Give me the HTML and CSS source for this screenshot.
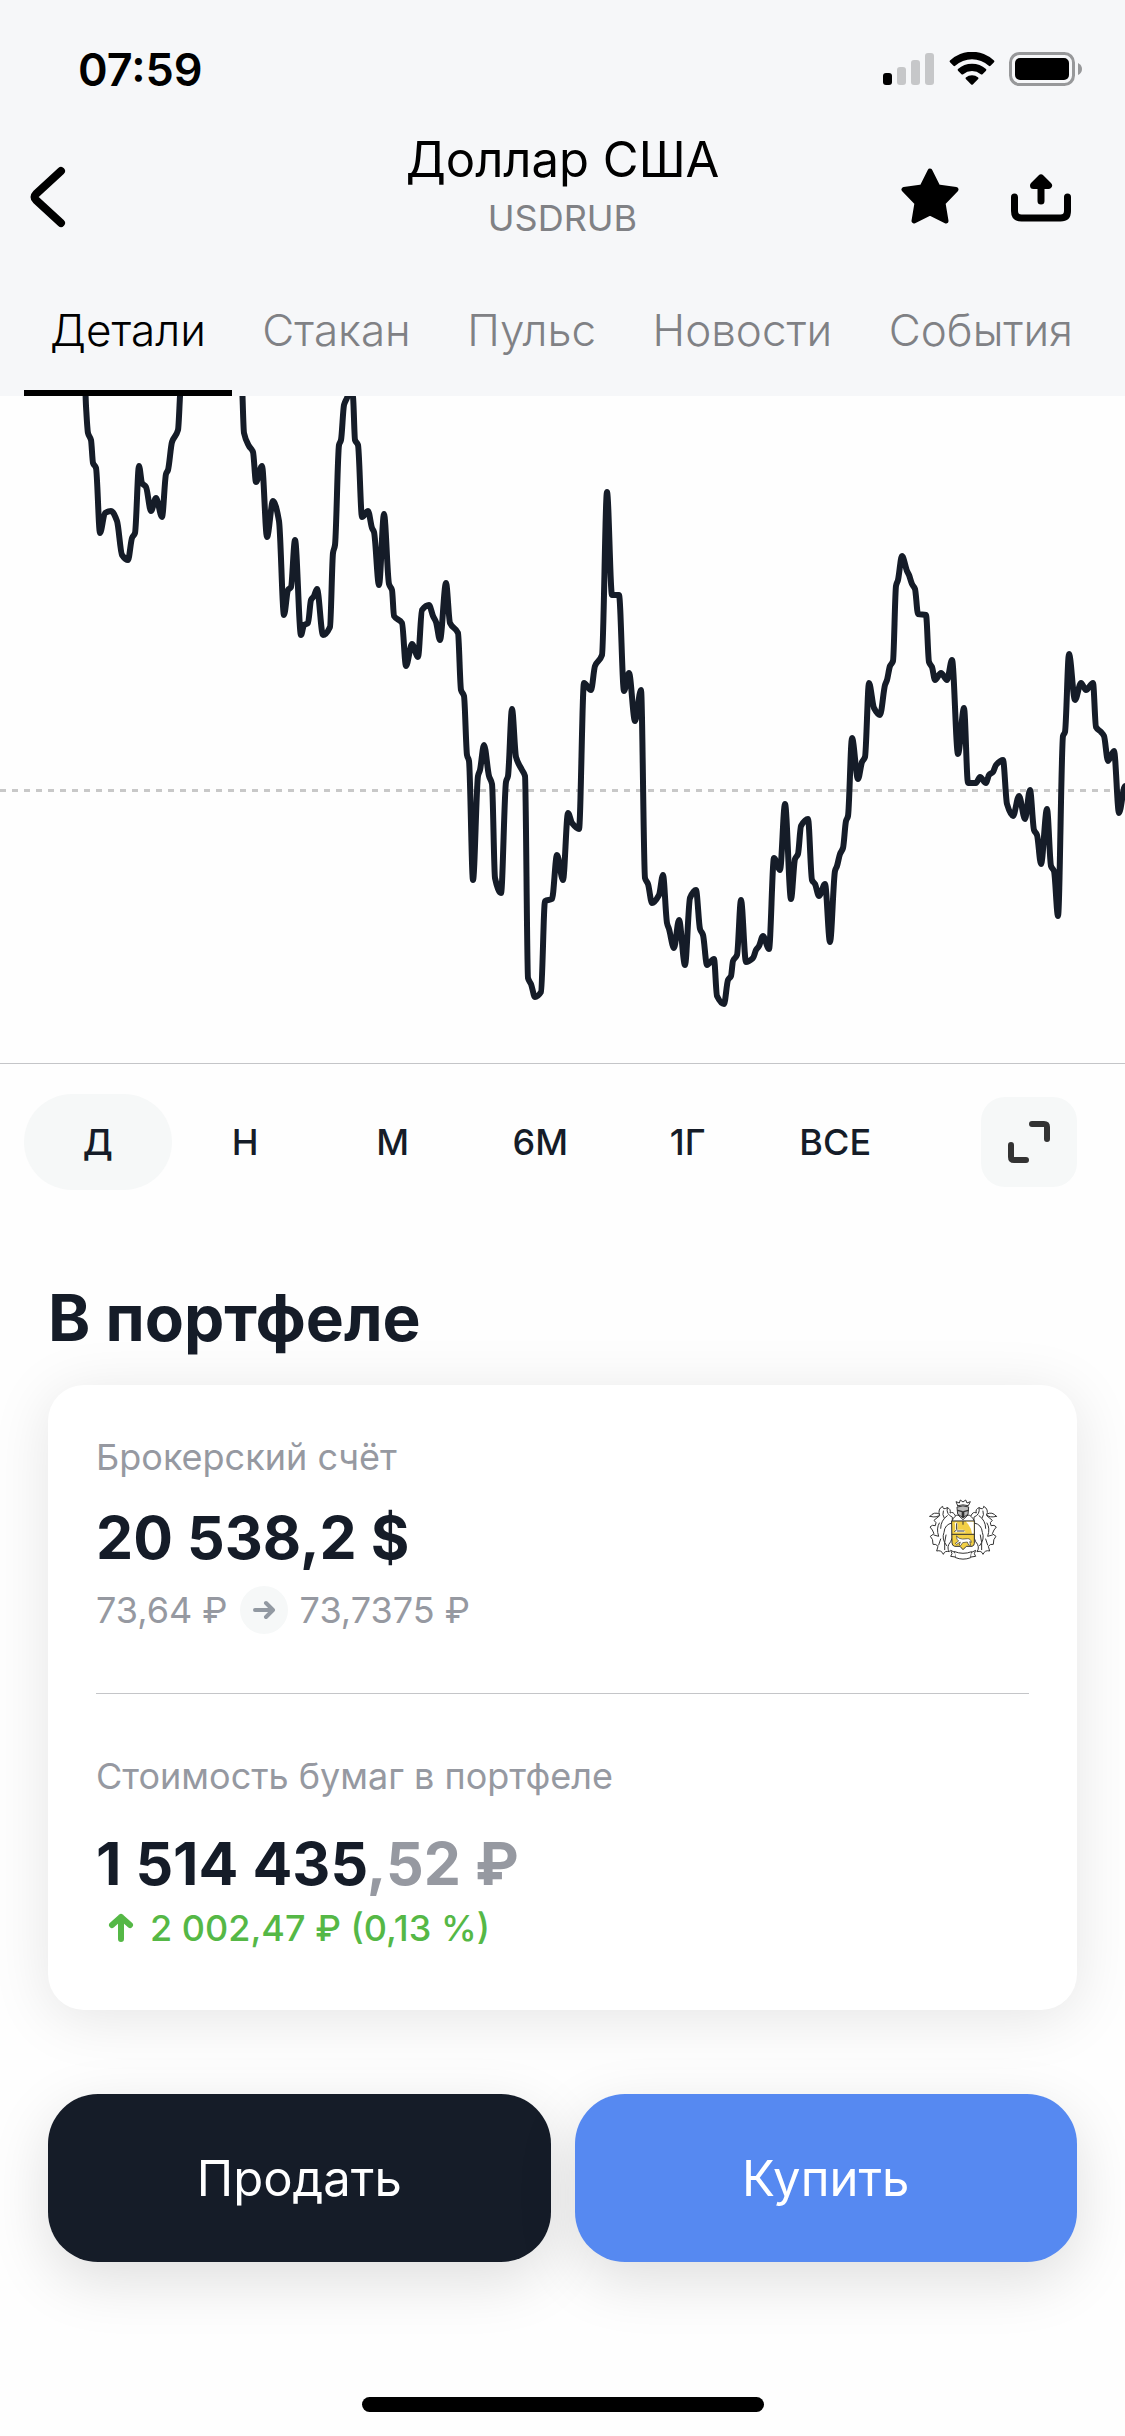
FILE: index.html
```html
<!DOCTYPE html>
<html lang="ru">
<head>
    <meta charset="UTF-8">
    <meta name="viewport" content="width=device-width, initial-scale=1.0">
    <title>Доллар США</title>
    <link rel="stylesheet" href="styles.css">
</head>
<body>
    <header class="header">
        <div class="status-bar">
            <span class="clock">07:59</span>
            <div class="status-icons">
                <svg width="52" height="34" viewBox="0 0 52 34">
                    <rect x="0" y="21" width="9" height="12" rx="3"/>
                    <g fill="#c6c7c9">
                        <rect x="14" y="15" width="9" height="18" rx="3"/>
                        <rect x="28" y="8" width="9" height="25" rx="3"/>
                        <rect x="42" y="1" width="9" height="32" rx="3"/>
                    </g>
                </svg>
                <svg width="46" height="34" viewBox="0 0 46 34">
                    <path d="M1 8.500 A32 32 0 0 1 45 8.500 Q45.800 9.300 45 10.200 L41.500 13.800 Q40.700 14.500 39.800 13.800 A25 25 0 0 0 6.200 13.800 Q5.300 14.500 4.500 13.800 L1 10.200 Q0.200 9.300 1 8.500Z"/>
                    <path d="M9 17 A21 21 0 0 1 37 17 Q37.800 17.900 37 18.700 L33.500 22.200 Q32.700 22.900 31.800 22.200 A14 14 0 0 0 14.200 22.200 Q13.300 22.900 12.500 22.200 L9 18.700 Q8.200 17.900 9 17Z"/>
                    <path d="M16.800 25.500 A10 10 0 0 1 29.200 25.500 Q29.800 26.200 29.200 26.900 L23.800 32.400 Q23 33.200 22.200 32.400 L16.800 26.900 Q16.200 26.200 16.800 25.500Z"/>
                </svg>
                <svg width="74" height="34" viewBox="0 0 74 34">
                    <rect x="1.500" y="1.500" width="63" height="31" rx="9" fill="none" stroke="#97989a" stroke-width="3"/>
                    <rect x="6" y="6" width="54" height="22" rx="5"/>
                    <path d="M69 11 Q73 13 73 17 Q73 21 69 23Z" fill="#97989a"/>
                </svg>
            </div>
        </div>

        <div class="nav-bar">
            <button class="icon-button" aria-label="Назад">
                <svg width="36" height="62" viewBox="0 0 36 62" fill="none" stroke="#000" stroke-width="8" stroke-linecap="round" stroke-linejoin="round">
                    <path d="M31 5 L6 28 Q3 31 6 34 L31 57"/>
                </svg>
            </button>
            <div class="titles">
                <h1>Доллар США</h1>
                <p>USDRUB</p>
            </div>
            <div class="nav-actions">
                <button class="icon-button" aria-label="В избранное">
                    <svg width="60" height="60" viewBox="0 0 60 60" stroke="#000" stroke-width="5" stroke-linejoin="round">
                        <path d="M29 4 L37 20 L55 22.500 L42 36 L45 54 L29 46 L13 54 L16 36 L3 22.500 L21 20Z"/>
                    </svg>
                </button>
                <button class="icon-button" aria-label="Поделиться">
                    <svg width="60" height="60" viewBox="0 0 60 60" fill="none" stroke="#000" stroke-width="7" stroke-linecap="round" stroke-linejoin="round">
                        <path d="M3.500 30 V44 Q3.500 51 10.500 51 H49.500 Q56.500 51 56.500 44 V30"/>
                        <path d="M30 12 V34"/>
                        <path d="M22.500 18.500 L30 11 L37.500 18.500Z" fill="#000"/>
                    </svg>
                </button>
            </div>
        </div>

        <nav class="tabs">
            <a href="#details" class="active">Детали</a>
            <a href="#orderbook">Стакан</a>
            <a href="#pulse">Пульс</a>
            <a href="#news">Новости</a>
            <a href="#events">События</a>
        </nav>
    </header>

    <main>
        <div class="chart">
            <svg viewBox="0 0 1125 667" role="img" aria-label="График цены">
                <path class="price-level" d="M0 394.500 H1125"/>
                <path class="price-line" id="price-line"/>
            </svg>
        </div>

        <div class="ranges">
            <div class="range-list">
                <button class="range active">Д</button>
                <button class="range">Н</button>
                <button class="range">М</button>
                <button class="range">6М</button>
                <button class="range">1Г</button>
                <button class="range">ВСЕ</button>
            </div>
            <button class="expand" aria-label="На весь экран">
                <svg width="44" height="44" viewBox="0 0 44 44" fill="none" stroke="#333" stroke-width="6" stroke-linecap="round" stroke-linejoin="round">
                    <path d="M25 4 H37 Q40 4 40 7 V19"/>
                    <path d="M4 25 V37 Q4 40 7 40 H19"/>
                </svg>
            </button>
        </div>

        <section class="portfolio">
            <h2>В портфеле</h2>
            <div class="card">
                <div class="position">
                    <div>
                        <p class="label">Брокерский счёт</p>
                        <p class="amount">20 538,2 $</p>
                        <p class="rates">
                            <span>73,64 ₽</span>
                            <span class="arrow">
                                <svg width="24" height="20" viewBox="0 0 24 20" fill="none" stroke="#9299a2" stroke-width="4" stroke-linecap="round" stroke-linejoin="round">
                                    <path d="M3 10 H20 M14 3 L21 10 L14 17"/>
                                </svg>
                            </span>
                            <span>73,7375 ₽</span>
                        </p>
                    </div>
                    <svg class="crest" width="78" height="70" viewBox="0 0 234 210" fill="#fff" stroke="#333" stroke-width="3" stroke-linejoin="round" stroke-linecap="round">
                        <!-- foliage, left half and its mirror -->
                        <g id="leaves">
                            <path d="M84 66 Q66 58 70 38 Q56 46 56 34 Q40 42 47 62 L30 76 Q40 82 34 92 Q24 88 18 96 Q26 104 30 116 L19 124 Q28 132 27 148 Q36 146 42 154 L38 168 Q52 164 58 178 Q62 166 76 170 Q66 156 80 140 L84 130Z"/>
                            <path d="M70 38 Q82 42 78 54 Q88 48 94 62"/>
                            <path d="M18 64 Q30 48 48 58 Q40 70 18 64Z"/>
                            <path fill="none" d="M84 84 Q62 88 60 112 Q52 132 68 152 M70 62 Q50 76 50 100 M58 48 Q54 60 60 68 M46 84 Q36 100 44 124 L30 120 M50 132 L44 150 M66 120 Q60 142 62 164"/>
                        </g>
                        <use href="#leaves" transform="matrix(-1 0 0 1 235 0)"/>
                        <path d="M101 32 L96 20 L106 24 L109 15 L117 21 L125 15 L129 24 L139 20 L133 32 Q117 27 101 32Z"/>
                        <path d="M100 36 Q117 29 134 36 L132 58 L117 68 L102 58Z" fill="#bbb"/>
                        <path fill="none" d="M101 46 L115 50 V66 M133 46 L119 50 V66" stroke-width="4"/>
                        <path d="M84 78 Q92 60 102 60 L117 74 L132 60 Q142 60 151 78Z"/>
                        <path d="M84 78 H151 V145 Q151 152 144 154 H127 L117 164 L108 154 H92 Q84 152 84 145Z" fill="#f2cf45"/>
                        <path stroke="none" d="M92 84 Q100 78 101 90 L100 104 H118 L125 112 H92 Q96 98 92 84Z"/>
                        <path stroke="none" d="M126 80 H149 V116 H144 Q142 96 126 80Z"/>
                        <path fill="none" d="M84 118 H151 M98 86 V104 L92 110 M100 108 H120 M117 80 V88" stroke-width="3"/>
                        <path stroke-width="2" d="M98 124 L106 130 Q114 134 130 131 Q140 130 142 142 L137 140 L140 151 L134 150 L130 141 L116 143 L110 152 L106 150 L109 141 L98 148 L94 145 L104 138 Q96 134 98 124Z"/>
                        <path d="M92 170 Q117 180 143 170 L140 188 Q117 197 95 188Z"/>
                        <path d="M92 172 L80 166 L84 176 L80 184 L94 186 M143 172 L155 166 L151 176 L155 184 L141 186"/>
                    </svg>
                </div>
                <div class="value">
                    <p class="label">Стоимость бумаг в портфеле</p>
                    <p class="amount">1 514 435<span class="cents">,52 ₽</span></p>
                    <p class="gain">
                        <svg width="26" height="30" viewBox="0 0 26 30" fill="none" stroke="#55b846" stroke-width="6" stroke-linecap="round" stroke-linejoin="round">
                            <path d="M13 26 V4 M4 12 L13 4 L22 12"/>
                        </svg>
                        <span>2 002,47 ₽ (0,13 %)</span>
                    </p>
                </div>
            </div>
        </section>

        <div class="actions">
            <button class="sell">Продать</button>
            <button class="buy">Купить</button>
        </div>
    </main>

    <div class="home-indicator"></div>

    <script src="chart.js"></script>
</body>
</html>
```

FILE: chart.js
```js
// x, y pairs in the chart's viewBox
const prices = `
85 -12 86 10 88 37 91 44 93 67 96 72 100 137 105 117 111 115 117 125 122 159 128 164 132 142 135 137 139 70
142 87 146 91 151 115 156 102 162 121 166 78 168 74 172 46 178 34 180 0 181 -20 242 -20 242.5 0 244 37 249 50
253 56 256 86 262 70 267 141 273 105 279 125 284 219 288 194 291 191 295 144 301 239 304 229 308 227 311 204
314 200 317 193 323 239 330 231 333 157 335 149 339 49 341 44 344 9 347 2 350 -6 353 1 355 44 358 49 362 121
368 115 372 132 374 136 379 189 384 118 389 188 392 194 394 220 402 227 406 270 412 248 418 261 422 214
429 209 433 220 436 226 440 244 446 187 450 227 458 237 461 294 464 300 467 359 469 365 473 484 478 380
480 374 484 349 489 380 492 388 495 482 501 497 506 386 508 380 512 313 516 361 522 374 525 380 528 582
531 588 535 601 541 596 545 505 552 503 557 459 563 484 568 417 572 427 579 433 584 287 591 294 595 270
602 259 607 96 612 199 619 199 624 295 629 277 635 325 641 294 645 482 648 488 652 507 659 499 663 479
667 527 669 533 674 552 679 524 685 569 690 502 696 494 700 533 703 539 707 569 714 563 717 600 724 608
728 584 731 580 733 565 737 559 741 504 746 566 753 562 756 554 759 550 763 540 769 553 774 462 780 474
785 408 791 503 795 463 798 458 801 430 808 423 812 484 815 488 819 500 825 488 830 546 835 475 837 470
840 458 843 452 846 425 848 420 852 342 858 383 862 366 865 361 869 287 874 312 880 319 885 289 887 284
890 270 893 265 896 190 898 184 902 160 907 175 909 179 912 188 915 193 918 218 926 219 929 266 932 271
935 284 941 277 947 284 952 264 958 358 964 312 968 387 976 387 980 381 986 387 989 379 993 376 996 369
1003 364 1007 408 1013 420 1019 400 1025 423 1030 394 1034 434 1037 439 1041 468 1047 413 1051 470
1054 475 1058 520 1063 340 1065 336 1069 258 1075 304 1081 287 1086 294 1093 287 1096 331 1101 336
1104 340 1108 365 1114 355 1119 417 1125 390
`.trim().split(/\s+/).map(Number);

const points = [];
for (let i = 0; i < prices.length; i += 2) {
    points.push({ x: prices[i], y: prices[i + 1] });
}

// slope at a point: flat at a peak or a dip, so the curve never overshoots
function tangent(i) {
    const a = points[i - 1], b = points[i], c = points[i + 1];
    if (!a || !c) return 0;
    const before = (b.y - a.y) / (b.x - a.x);
    const after = (c.y - b.y) / (c.x - b.x);
    if (before * after <= 0) return 0;
    return 2 * before * after / (before + after);
}

let path = `M${points[0].x} ${points[0].y}`;
for (let i = 1; i < points.length; i++) {
    const p = points[i - 1], q = points[i];
    const dx = (q.x - p.x) / 3;
    path += ` C${p.x + dx} ${p.y + dx * tangent(i - 1)} ${q.x - dx} ${q.y - dx * tangent(i)} ${q.x} ${q.y}`;
}

document.getElementById("price-line").setAttribute("d", path);
```

FILE: styles.css
```css
* {
    box-sizing: border-box;
}

body {
    margin: 0;
    font-family: Inter, "Liberation Sans", sans-serif;
    background-color: #fefefe;
    color: #151c28;
}

h1, h2, p {
    margin: 0;
}

svg {
    display: block;
}

button {
    padding: 0;
    border: none;
    background: none;
    font-family: inherit;
    color: inherit;
    cursor: pointer;
}

.header {
    background-color: #f6f7f9;
    color: #000;
}

.status-bar {
    display: flex;
    justify-content: space-between;
    align-items: center;
    height: 128px;
    padding: 10px 42px 0 78px;
}

.clock {
    font-size: 45px;
    font-weight: 600;
}

.status-icons {
    display: flex;
    gap: 14px;
}

.nav-bar {
    display: grid;
    grid-template-columns: 1fr auto 1fr;
    align-items: center;
    height: 138px;
    padding: 0 30px;
}

.titles {
    align-self: start;
    text-align: center;
}

.titles h1 {
    font-size: 49px;
    line-height: 64px;
    font-weight: 400;
}

.titles p {
    font-size: 36px;
    line-height: 52px;
    color: #808185;
}

.nav-actions {
    display: flex;
    justify-content: flex-end;
    gap: 50px;
    padding-right: 24px;
}

.tabs {
    display: flex;
    justify-content: space-between;
    height: 130px;
    padding: 0 26px 0 24px;
}

.tabs a {
    padding: 36px 26px 0;
    border-bottom: 6px solid transparent;
    font-size: 44px;
    line-height: 56px;
    font-weight: 300;
    color: #808185;
    text-decoration: none;
}

.tabs a.active {
    border-color: #000;
    color: #000;
}

.chart {
    border-bottom: 1px solid #c4c5c8;
}

.chart svg {
    width: 100%;
}

.price-line {
    fill: none;
    stroke: #151c28;
    stroke-width: 6;
    stroke-linecap: round;
    stroke-linejoin: round;
}

.price-level {
    stroke: #c8c8c8;
    stroke-width: 3;
    stroke-dasharray: 6 6;
}

.ranges {
    display: flex;
    justify-content: space-between;
    align-items: center;
    padding: 30px 48px 0 24px;
}

.range-list {
    display: flex;
    flex: 0 1 885px;
}

.range {
    flex: 1;
    height: 96px;
    border-radius: 48px;
    font-size: 36px;
    font-weight: 500;
}

.range.active {
    background-color: #f6f8f8;
}

.expand {
    display: flex;
    align-items: center;
    justify-content: center;
    width: 96px;
    height: 90px;
    border-radius: 24px;
    background-color: #f6f8f8;
}

.portfolio {
    padding: 88px 48px 0;
}

.portfolio h2 {
    font-size: 64px;
    line-height: 80px;
    font-weight: 700;
}

.card {
    margin-top: 27px;
    padding: 0 48px;
    border-radius: 36px;
    background-color: #fff;
    box-shadow: 0 8px 60px rgba(0, 0, 0, 0.1);
}

.position {
    display: flex;
    justify-content: space-between;
    align-items: center;
    padding: 48px 27px 59px 0;
    border-bottom: 1px solid #c4c5c8;
    margin-bottom: 58px;
}

.crest {
    margin-bottom: 8px;
}

.label {
    font-size: 36px;
    line-height: 48px;
    color: #9699a1;
}

.amount {
    margin-top: 21px;
    font-size: 59px;
    line-height: 72px;
    font-weight: 700;
}

.cents {
    color: #9699a1;
}

.rates {
    display: flex;
    align-items: center;
    gap: 12px;
    margin-top: 12px;
    font-size: 36px;
    line-height: 48px;
    color: #9699a1;
}

.arrow {
    display: flex;
    align-items: center;
    justify-content: center;
    width: 48px;
    height: 48px;
    border-radius: 24px;
    background-color: #f6f8f8;
}

.value {
    padding-bottom: 58px;
}

.value .amount {
    margin-top: 28px;
}

.gain {
    display: flex;
    align-items: center;
    gap: 16px;
    margin-top: 4px;
    padding-left: 12px;
    font-size: 36px;
    line-height: 48px;
    font-weight: 500;
    color: #55b846;
}

.actions {
    display: flex;
    gap: 24px;
    padding: 84px 48px 0;
}

.actions button {
    flex: 1;
    height: 168px;
    border-radius: 50px;
    font-size: 49px;
    color: #fff;
    box-shadow: 0 18px 60px rgba(0, 0, 0, 0.13);
}

.actions .sell {
    background-color: #151c28;
}

.actions .buy {
    background-color: #5689f1;
}

.home-indicator {
    width: 402px;
    height: 15px;
    margin: 135px auto 24px;
    border-radius: 8px;
    background-color: #000;
}
```
